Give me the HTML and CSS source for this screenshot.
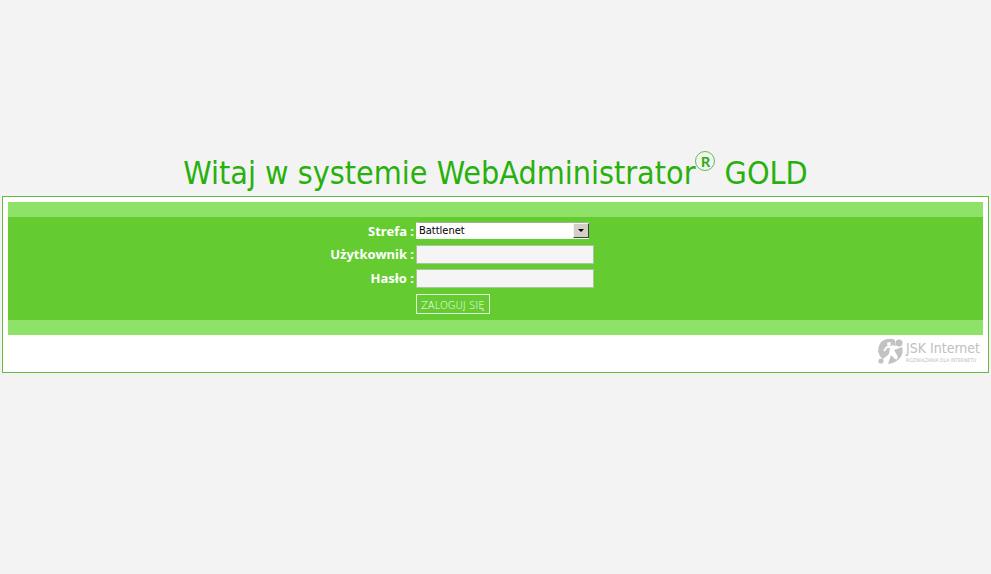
FILE: index.html
```
<!DOCTYPE html>
<html lang="pl">
<head>
  <meta charset="UTF-8">
  <meta name="viewport" content="width=device-width, initial-scale=1">
  <title>WebAdministrator GOLD</title>
  <link rel="stylesheet" href="styles.css">
</head>
<body>

  <h1>Witaj w systemie WebAdministrator<sup>R</sup> GOLD</h1>

  <div class="box">
    <form class="login" action="#" method="post">
      <label for="strefa">Strefa :</label>
      <div class="select-wrap">
        <select id="strefa" name="strefa">
          <option>Battlenet</option>
        </select>
        <span class="arrow"></span>
      </div>

      <label for="user">Użytkownik :</label>
      <input type="text" id="user" name="user">

      <label for="haslo">Hasło :</label>
      <input type="password" id="haslo" name="haslo">

      <button type="submit">ZALOGUJ SIĘ</button>
    </form>

    <div class="footer">
      <a href="#" class="logo">
        <svg width="27" height="27" viewBox="0 0 27 27" aria-hidden="true">
          <path fill="#c2c2c2" d="M4 4Q9 0 16 1Q19 2 18 5L19 8L15 7L13 11L15 14L6 21Q2 18 1 13Q1 8 4 4Z"/>
          <path fill="#c2c2c2" d="M20 11L25 9Q27 15 23 20Q19 25 11 26L14 17L18 21L21 19L17 12Z"/>
          <circle cx="22" cy="5" r="3.5" fill="#c2c2c2"/>
          <circle cx="4" cy="23" r="2.6" fill="#c2c2c2"/>
          <circle cx="12" cy="6" r="2" fill="#fff"/>
          <path fill="none" stroke="#fff" stroke-width="2" d="M7 13L10 9L14 9L19 10M14 10L13 16L7 24M14 14L20 21"/>
        </svg>
        <span class="logo-text">
          <span class="logo-name">JSK Internet</span>
          <span class="logo-sub">ROZWIĄZANIA DLA INTERNETU</span>
        </span>
      </a>
    </div>
  </div>

</body>
</html>
```

FILE: styles.css
```
body {
  margin: 0;
  padding: 150px 2px 0;
  background: #f3f3f3;
  font-family: "Noto Sans", sans-serif;
}
h1 {
  margin: 0;
  color: #28b00c;
  font-family: "DejaVu Sans Condensed", "DejaVu Sans", sans-serif;
  font-size: 32px;
  font-weight: normal;
  line-height: 46px;
  text-align: center;
}
h1 sup {
  display: inline-block;
  box-sizing: border-box;
  width: 20px;
  height: 20px;
  border: 1px solid #5cc048;
  border-radius: 50%;
  font-family: "Noto Sans", sans-serif;
  font-size: 15px;
  font-weight: 600;
  line-height: 18px;
  vertical-align: 17px;
}
.box {
  padding: 5px;
  background: #fff;
  border: 1px solid #64bc3c;
}
.login {
  display: grid;
  grid-template-columns: 406px 178px;
  column-gap: 2px;
  row-gap: 5px;
  align-items: start;
  padding: 5px 0 6px;
  background: #64cc30;
  border-top: 15px solid #8ee268;
  border-bottom: 15px solid #8ee268;
}
.login label {
  color: #fff;
  font-size: 13px;
  font-weight: bold;
  line-height: 18px;
  text-align: right;
}
.login input {
  box-sizing: border-box;
  width: 100%;
  height: 19px;
  padding: 1px 3px;
  background: #f5f5f5;
  border: 1px solid #a9c49c;
  font-size: 11px;
}
.select-wrap {
  position: relative;
  width: 173px;
  height: 17px;
}
.login select {
  display: block;
  appearance: none;
  box-sizing: border-box;
  width: 100%;
  height: 17px;
  padding: 0 18px 0 2px;
  background: #fff;
  border: 1px solid #f4f4f4;
  border-top-color: #9ab88c;
  border-radius: 0;
  color: #000;
  font-family: "DejaVu Sans Condensed", sans-serif;
  font-size: 11px;
}
.arrow {
  position: absolute;
  top: 1px;
  right: 0;
  display: flex;
  align-items: center;
  justify-content: center;
  box-sizing: border-box;
  width: 16px;
  height: 15px;
  background: #d4d0c8;
  border: 1px solid #f4f4f4;
  border-right-color: #404040;
  border-bottom-color: #404040;
  pointer-events: none;
}
.arrow::before {
  content: "";
  border: 3px solid transparent;
  border-top-color: #000;
  border-bottom: 0;
}
.login button {
  grid-column: 2;
  justify-self: start;
  height: 20px;
  margin-top: 1px;
  padding: 2px 4px 0;
  background: #64cc30;
  border: 1px solid #e4f6dc;
  color: #fff;
  font-family: "DejaVu Sans", sans-serif;
  font-size: 10px;
  font-weight: 200;
  cursor: pointer;
}
.footer {
  display: flex;
  justify-content: flex-end;
  padding: 3px 3px 2px;
}
.logo {
  display: flex;
  gap: 2px;
  color: #c0c0c0;
  text-decoration: none;
}
.logo svg {
  display: block;
}
.logo-text {
  display: flex;
  flex-direction: column;
  font-family: "DejaVu Sans Condensed", sans-serif;
}
.logo-name {
  font-size: 14px;
  line-height: 20px;
}
.logo-sub {
  font-size: 5px;
  line-height: 5px;
}
```
